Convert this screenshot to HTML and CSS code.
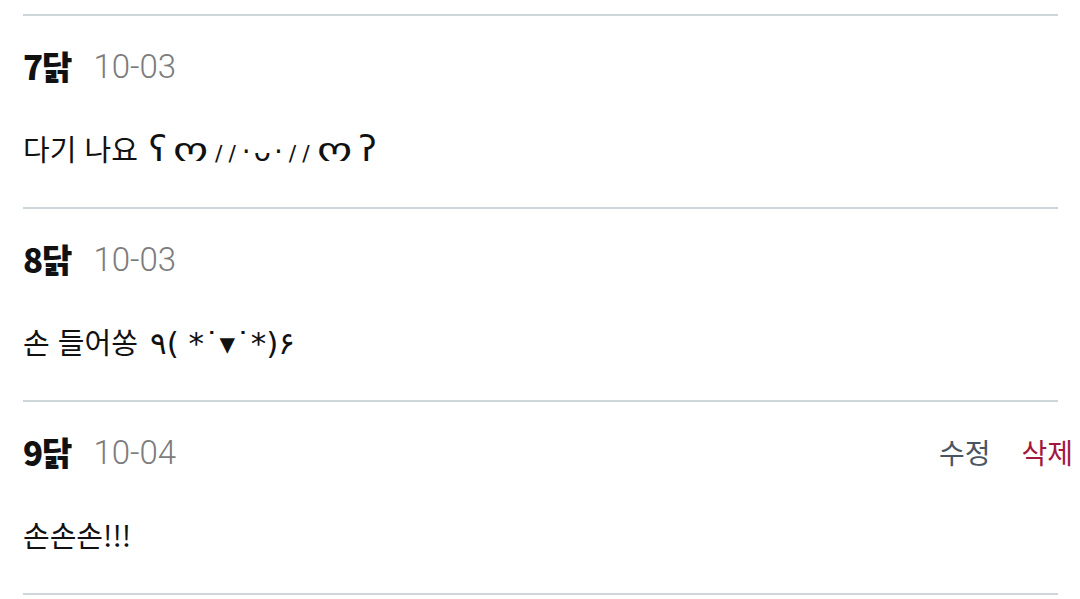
FILE: index.html
```html
<!DOCTYPE html>
<html lang="ko">
<head>
<meta charset="utf-8">
<link rel="stylesheet" href="styles.css">
</head>
<body>
<div class="list">
  <div class="top-divider"></div>
  <div class="comment">
    <div class="head">
      <div class="meta"><span class="author">7닭</span><span class="date">10-03</span></div>
    </div>
    <p class="body">다기 나요 <span class="kao"><span class="ear">ʕ</span><span class="big">ო</span><span class="sl">/</span><span class="sl">/</span><span class="dot">·</span><span class="mouth">ᴗ</span><span class="dot">·</span><span class="sl">/</span><span class="sl">/</span><span class="big">ო</span><span class="ear">ʔ</span></span></p>
  </div>
  <div class="comment">
    <div class="head">
      <div class="meta"><span class="author">8닭</span><span class="date">10-03</span></div>
    </div>
    <p class="body">손 들어쏭 <span class="kao2">٩( *˙▾˙*)۶</span></p>
  </div>
  <div class="comment">
    <div class="head">
      <div class="meta"><span class="author">9닭</span><span class="date">10-04</span></div>
      <div class="actions"><button class="edit">수정</button><button class="delete">삭제</button></div>
    </div>
    <p class="body">손손손!!!</p>
  </div>
</div>
</body>
</html>
```
FILE: styles.css
```css
* { box-sizing: border-box; }
html, body { margin: 0; padding: 0; background: #ffffff; }
body {
  font-family: "Noto Sans CJK KR", "Noto Sans", "DejaVu Sans", sans-serif;
  color: #151515;
  width: 1080px;
  height: 599px;
  overflow: hidden;
}
.list {
  padding: 14px 7px 0 23px;
}
.top-divider,
.comment::after {
  display: block;
  height: 2px;
  background: #cfd6da;
  margin-right: 15px;
}
.comment::after { content: ""; }
.comment { padding-top: 24px; }
.head {
  display: flex;
  justify-content: space-between;
  align-items: center;
  height: 52px;
}
.meta { display: flex; align-items: center; }
.author {
  font-family: "Noto Sans CJK KR", sans-serif;
  font-weight: 900;
  font-size: 33px;
  letter-spacing: -1px;
  color: #111;
}
.date {
  font-family: Roboto, "Noto Sans", sans-serif;
  font-weight: 300;
  font-size: 33px;
  color: #7c7c7c;
  margin-left: 22px;
}
.actions { display: flex; gap: 31px; }
.actions button {
  border: 0;
  background: none;
  padding: 0;
  font-family: "Noto Sans CJK KR", sans-serif;
  font-size: 28px;
  cursor: pointer;
}
.edit { color: #4a5562; }
.delete { color: #a3173f; }
.body {
  margin: 34px 0 37px;
  height: 44px;
  line-height: 44px;
  font-size: 29px;
  font-weight: 400;
  color: #111;
  white-space: nowrap;
}
.kao {
  font-family: "DejaVu Sans", sans-serif;
  font-size: 28px;
}
.kao .ear { font-size: 35px; margin: 0 2px 0 3px; }
.kao .big {
  display: inline-block;
  font-size: 32px;
  transform: scaleX(1.4);
  margin: 0 9px;
  line-height: 1;
}
.kao .sl {
  font-size: 22px;
  margin: 0 3px;
}
.kao .dot { margin: 0 3px; }
.kao .mouth { font-size: 28px; }
.kao2 {
  font-family: "DejaVu Sans", sans-serif;
  letter-spacing: 4px;
  font-size: 31px;
  margin-left: 4px;
}
```
